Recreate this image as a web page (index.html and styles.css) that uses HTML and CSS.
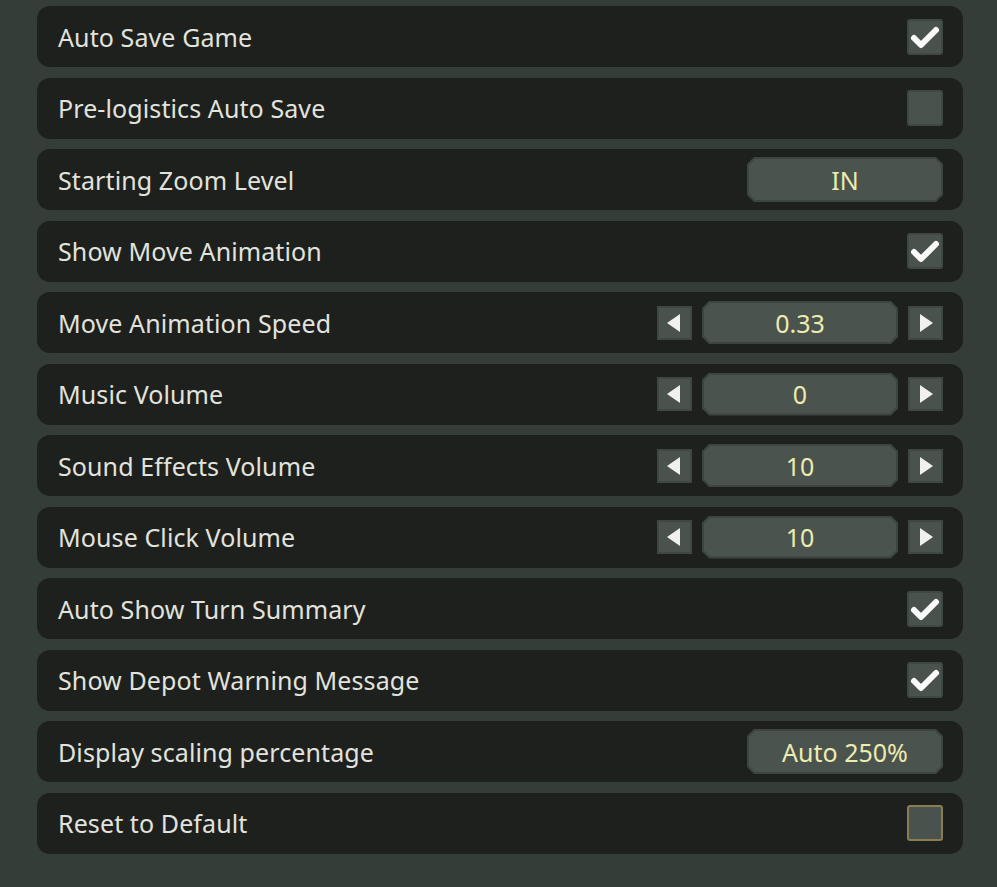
FILE: index.html
```html
<!DOCTYPE html>
<html lang="en">
<head>
  <meta charset="UTF-8" />
  <title>Options</title>
  <link rel="stylesheet" href="styles.css">
</head>
<body>

  <div class="options">

    <div class="row">
      <span class="label">Auto Save Game</span>
      <span class="check on"><svg viewBox="0 0 36 36"><path d="M7 19 L14 26 L29 11" /></svg></span>
    </div>

    <div class="row">
      <span class="label">Pre-logistics Auto Save</span>
      <span class="check"></span>
    </div>

    <div class="row">
      <span class="label">Starting Zoom Level</span>
      <span class="value wide"><span>IN</span></span>
    </div>

    <div class="row">
      <span class="label">Show Move Animation</span>
      <span class="check on"><svg viewBox="0 0 36 36"><path d="M7 19 L14 26 L29 11" /></svg></span>
    </div>

    <div class="row">
      <span class="label">Move Animation Speed</span>
      <div class="stepper">
        <span class="arrow left"></span>
        <span class="value"><span>0.33</span></span>
        <span class="arrow right"></span>
      </div>
    </div>

    <div class="row">
      <span class="label">Music Volume</span>
      <div class="stepper">
        <span class="arrow left"></span>
        <span class="value"><span>0</span></span>
        <span class="arrow right"></span>
      </div>
    </div>

    <div class="row">
      <span class="label">Sound Effects Volume</span>
      <div class="stepper">
        <span class="arrow left"></span>
        <span class="value"><span>10</span></span>
        <span class="arrow right"></span>
      </div>
    </div>

    <div class="row">
      <span class="label">Mouse Click Volume</span>
      <div class="stepper">
        <span class="arrow left"></span>
        <span class="value"><span>10</span></span>
        <span class="arrow right"></span>
      </div>
    </div>

    <div class="row">
      <span class="label">Auto Show Turn Summary</span>
      <span class="check on"><svg viewBox="0 0 36 36"><path d="M7 19 L14 26 L29 11" /></svg></span>
    </div>

    <div class="row">
      <span class="label">Show Depot Warning Message</span>
      <span class="check on"><svg viewBox="0 0 36 36"><path d="M7 19 L14 26 L29 11" /></svg></span>
    </div>

    <div class="row">
      <span class="label">Display scaling percentage</span>
      <span class="value wide"><span>Auto 250%</span></span>
    </div>

    <div class="row">
      <span class="label">Reset to Default</span>
      <span class="check gold"></span>
    </div>

  </div>

</body>
</html>
```

FILE: styles.css
```css
/* === BASE === */
* { margin: 0; padding: 0; box-sizing: border-box; }

body {
  background: #353d38;
  font-family: 'Noto Sans', 'Open Sans', sans-serif;
  color: #e2e3de;
  height: 887px;
  overflow: hidden;
}

/* === LIST === */
.options {
  display: flex;
  flex-direction: column;
  gap: 10.5px;
  padding: 6px 34px 0 37px;
}

.row {
  height: 61px;
  background: #1d201d;
  border-radius: 13px;
  display: flex;
  align-items: center;
  justify-content: space-between;
  padding: 0 20px 0 21px;
}

.label {
  font-size: 25px;
  letter-spacing: 0.1px;
}

/* === CHECKBOX === */
.check {
  width: 36px;
  height: 36px;
  background: #4a524d;
  border: 2px solid #404843;
  border-radius: 3px;
  display: flex;
  align-items: center;
  justify-content: center;
}

.check svg {
  width: 36px;
  height: 36px;
  flex: none;
}

.check path {
  fill: none;
  stroke: #fafafa;
  stroke-width: 6;
  stroke-linecap: round;
  stroke-linejoin: round;
}

.check.gold {
  border-color: #8c7c52;
}

/* === VALUE BOXES === */
.stepper {
  display: flex;
  align-items: center;
  gap: 10px;
}

.value {
  width: 196px;
  height: 43px;
  background: #3d4540;
  clip-path: polygon(7px 0, calc(100% - 7px) 0, 100% 7px, 100% calc(100% - 7px), calc(100% - 7px) 100%, 7px 100%, 0 calc(100% - 7px), 0 7px);
  padding: 2px;
  display: flex;
}

.value.wide {
  height: 45px;
}

.value span {
  flex: 1;
  background: #4b534e;
  clip-path: polygon(6px 0, calc(100% - 6px) 0, 100% 6px, 100% calc(100% - 6px), calc(100% - 6px) 100%, 6px 100%, 0 calc(100% - 6px), 0 6px);
  color: #ecebb0;
  font-size: 25px;
  display: flex;
  align-items: center;
  justify-content: center;
}

/* === ARROWS === */
.arrow {
  width: 35px;
  height: 34px;
  background: #4a524d;
  border: 2px solid #3f4742;
  display: flex;
  align-items: center;
  justify-content: center;
}

.arrow::before {
  content: '';
  width: 0;
  height: 0;
  border-top: 9px solid transparent;
  border-bottom: 9px solid transparent;
}

.arrow.left::before {
  border-right: 13px solid #f0f0ee;
  margin-left: -2px;
}

.arrow.right::before {
  border-left: 13px solid #f0f0ee;
  margin-right: -2px;
}
```
